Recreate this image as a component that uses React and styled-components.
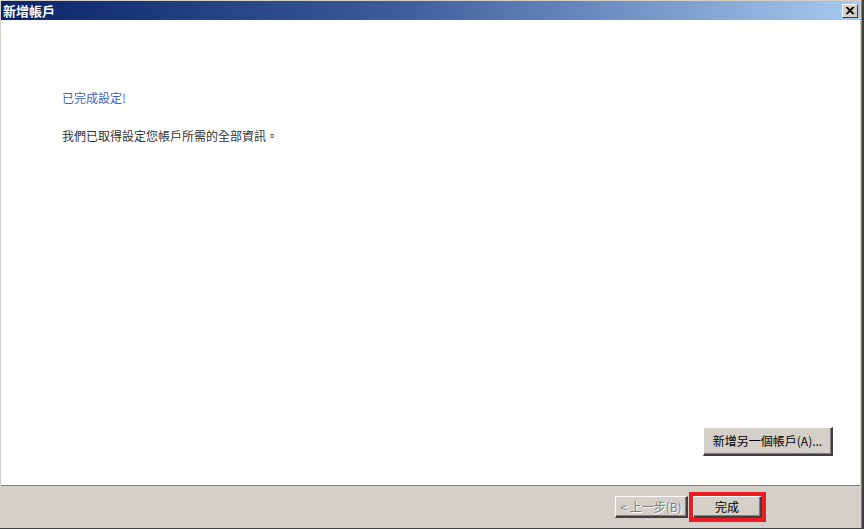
import React from "react";
import styled, { createGlobalStyle } from "styled-components";

const GlobalStyle = createGlobalStyle`
  html, body {
    margin: 0;
    padding: 0;
    background: #404040;
  }
  body {
    font-family: "Noto Sans CJK TC", "Liberation Sans", sans-serif;
  }
`;

const Frame = styled.div`
  width: 864px;
  height: 529px;
  box-sizing: border-box;
  padding: 0 2px 1px 0;
  background: #404040;
`;

const Dialog = styled.div`
  height: 100%;
  display: flex;
  flex-direction: column;
  background: #d4d0c8;
  padding: 1px 1px 0 1px;
  box-sizing: border-box;
  border-right: 1px solid #808080;
`;

const TitleBar = styled.div`
  height: 19px;
  flex-shrink: 0;
  display: flex;
  align-items: center;
  justify-content: space-between;
  padding: 0 2px 0 2px;
  background: linear-gradient(to right, #0a246a, #3a5a9a 45%, #a6caf0);
`;

const Title = styled.span`
  color: #fff;
  font-size: 13px;
  font-weight: bold;
  line-height: 19px;
  letter-spacing: 0;
`;

const CloseButton = styled.div`
  width: 16px;
  height: 14px;
  box-sizing: border-box;
  background: #d4d0c8;
  border-top: 1px solid #fff;
  border-left: 1px solid #fff;
  border-right: 1px solid #404040;
  border-bottom: 1px solid #404040;
  display: flex;
  align-items: center;
  justify-content: center;
`;

const Content = styled.div`
  flex: 1;
  background: #fff;
  border-bottom: 1px solid #808080;
  display: flex;
  flex-direction: column;
  padding: 70px 27px 29px 61px;
`;

const Heading = styled.div`
  color: #3c62c6;
  font-size: 12px;
  line-height: 14px;
  margin-top: 1px;
`;

const Message = styled.div`
  color: #333;
  font-size: 12px;
  line-height: 14px;
  margin-top: 24px;
`;

const Spacer = styled.div`
  flex: 1;
`;

const ActionRow = styled.div`
  display: flex;
  justify-content: flex-end;
`;

const Button = styled.button`
  font-family: "Noto Sans CJK TC", "Liberation Sans", sans-serif;
  font-size: 12px;
  line-height: 14px;
  background: #d4d0c8;
  color: ${(p) => (p.disabled ? "#808080" : "#000")};
  text-shadow: ${(p) => (p.disabled ? "1px 1px 0 #fff" : "none")};
  width: ${(p) => p.$w}px;
  height: ${(p) => p.$h}px;
  padding: 0;
  margin: 0;
  box-sizing: border-box;
  border-style: solid;
  border-width: 1px 2px 2px 1px;
  border-color: #fff #404040 #404040 #fff;
  box-shadow: inset -1px -1px 0 #808080;
  display: flex;
  align-items: center;
  justify-content: center;
`;

const Footer = styled.div`
  height: 42px;
  flex-shrink: 0;
  display: flex;
  align-items: center;
  justify-content: flex-end;
  padding: 0 94px 0 0;
  gap: 1px;
`;

const Highlight = styled.div`
  border: 4px solid #ed1c24;
  padding: 0 0 0 0;
  display: flex;
`;

export default function App() {
  return (
    <>
      <GlobalStyle />
      <Frame>
        <Dialog>
          <TitleBar>
            <Title>新增帳戶</Title>
            <CloseButton>
              <svg width="9" height="8" viewBox="0 0 9 8">
                <path d="M1 0 L8 7 M8 0 L1 7 M0 0 L7 7 M7 0 L0 7" stroke="#000" strokeWidth="1.2" fill="none" />
              </svg>
            </CloseButton>
          </TitleBar>
          <Content>
            <Heading>已完成設定!</Heading>
            <Message>我們已取得設定您帳戶所需的全部資訊。</Message>
            <Spacer />
            <ActionRow>
              <Button $w={130} $h={29}>新增另一個帳戶(A)...</Button>
            </ActionRow>
          </Content>
          <Footer>
            <Button $w={73} $h={22} disabled>
              &lt; 上一步(B)
            </Button>
            <Highlight>
              <Button $w={69} $h={22}>完成</Button>
            </Highlight>
          </Footer>
        </Dialog>
      </Frame>
    </>
  );
}
